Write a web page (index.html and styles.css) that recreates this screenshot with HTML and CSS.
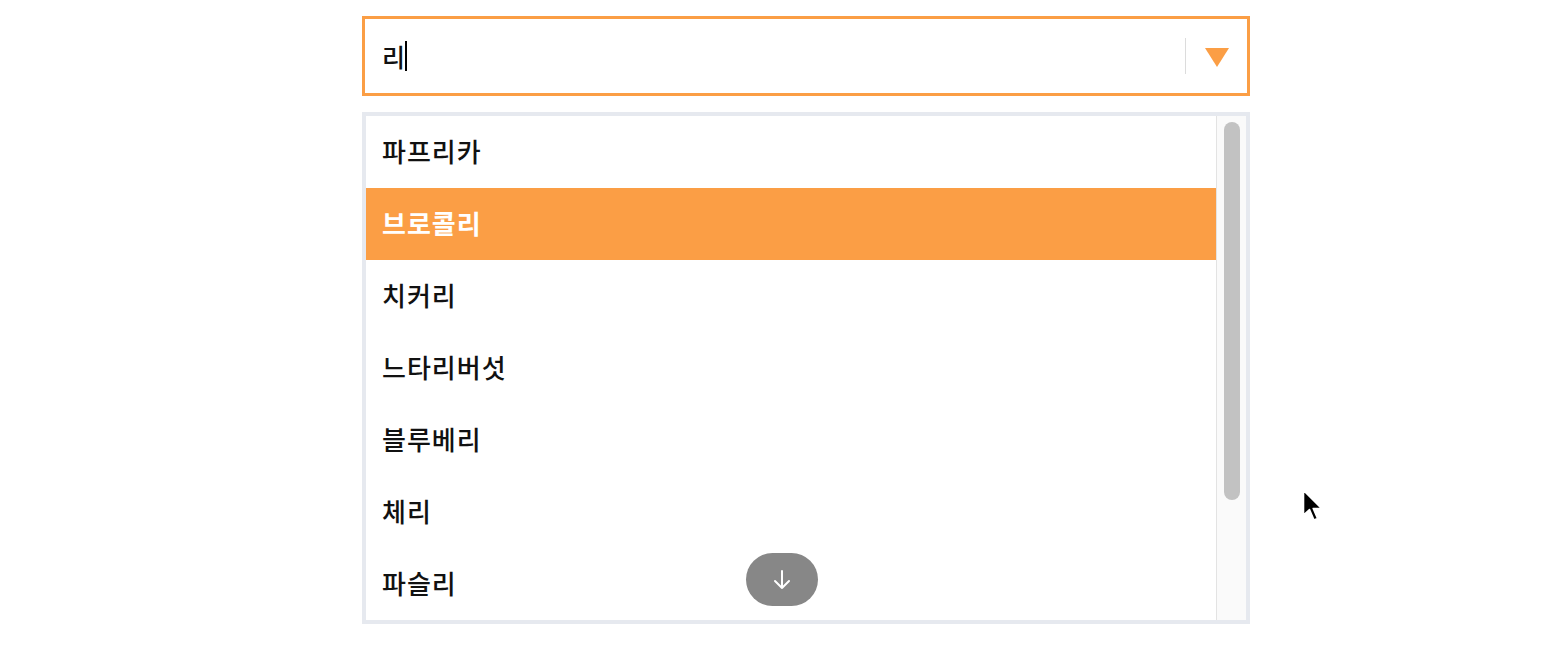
FILE: index.html
```html
<!DOCTYPE html>
<html lang="ko">
<head>
<meta charset="utf-8">
<title>Combobox</title>
<link rel="stylesheet" href="styles.css">
</head>
<body>
<div class="wrap">
  <div class="combo">
    <div class="field"><span class="value">리</span><span class="caret"></span></div>
    <div class="divider"></div>
    <div class="toggle"><svg width="24" height="19" viewBox="0 0 24 19"><polygon points="0,0 24,0 12,19" fill="#fb9e45"/></svg></div>
  </div>
  <div class="list">
    <ul class="items">
      <li class="item">파프리카</li>
      <li class="item active">브로콜리</li>
      <li class="item">치커리</li>
      <li class="item">느타리버섯</li>
      <li class="item">블루베리</li>
      <li class="item">체리</li>
      <li class="item">파슬리</li>
    </ul>
    <div class="track"><div class="thumb"></div></div>
    <button class="more" type="button"><svg width="20" height="22" viewBox="0 0 20 22"><path d="M10 2 V19 M3 12 L10 19 L17 12" fill="none" stroke="#fff" stroke-width="2" stroke-linecap="round" stroke-linejoin="round"/></svg></button>
  </div>
</div>
<svg class="pointer" width="22" height="36" viewBox="0 0 22 36"><path d="M1.5 1.5 L1.5 26 L7.5 20.5 L12 31 L15.5 29.5 L11.2 19.5 L19.5 19.5 Z" fill="#000" stroke="#fff" stroke-width="1.6" stroke-linejoin="round"/></svg>
</body>
</html>
```
FILE: styles.css
```css
* { box-sizing: border-box; }
html, body { margin: 0; padding: 0; background: #fff; }
body {
  font-family: "Noto Sans CJK KR", "Noto Sans", sans-serif;
  color: #111;
  width: 1564px;
  height: 646px;
  overflow: hidden;
  position: relative;
}
.wrap {
  width: 888px;
  margin-left: 362px;
  padding-top: 16px;
  display: flex;
  flex-direction: column;
  gap: 16px;
}
.combo {
  height: 80px;
  border: 3px solid #fb9e45;
  display: flex;
  align-items: center;
  padding-left: 17px;
}
.field {
  flex: 1;
  display: flex;
  align-items: center;
  font-size: 25px;
  font-weight: 500;
}
.value { line-height: 1; }
.caret {
  display: inline-block;
  width: 2px;
  height: 30px;
  background: #000;
  margin-left: 0;
}
.divider {
  width: 1px;
  height: 36px;
  background: #dcdcdc;
}
.toggle {
  width: 61px;
  display: flex;
  justify-content: center;
  align-items: center;
  padding-top: 3px;
}
.toggle svg { display: block; }
.list {
  position: relative;
  height: 512px;
  border: 4px solid #e6e9ef;
  display: flex;
}
.items {
  list-style: none;
  margin: 0;
  padding: 0;
  width: 850px;
}
.item {
  height: 72px;
  display: flex;
  align-items: center;
  padding-left: 16px;
  padding-bottom: 4px;
  font-size: 26px;
  letter-spacing: 1px;
  font-weight: 500;
  color: #111;
}
.item.active {
  background: #fb9e45;
  color: #fff;
  font-weight: 700;
}
.track {
  flex: 1;
  border-left: 1px solid #e3e3e3;
  background: #fafafa;
  padding: 6px 0 0 7px;
}
.thumb {
  width: 16px;
  height: 378px;
  border-radius: 8px;
  background: #c2c2c2;
}
.more {
  position: absolute;
  left: 380px;
  top: 437px;
  width: 72px;
  height: 53px;
  border: 0;
  border-radius: 27px;
  background: #878787;
  display: flex;
  align-items: center;
  justify-content: center;
  padding: 0;
}
.more svg { display: block; }
.pointer {
  position: absolute;
  left: 1302px;
  top: 489px;
}
```
